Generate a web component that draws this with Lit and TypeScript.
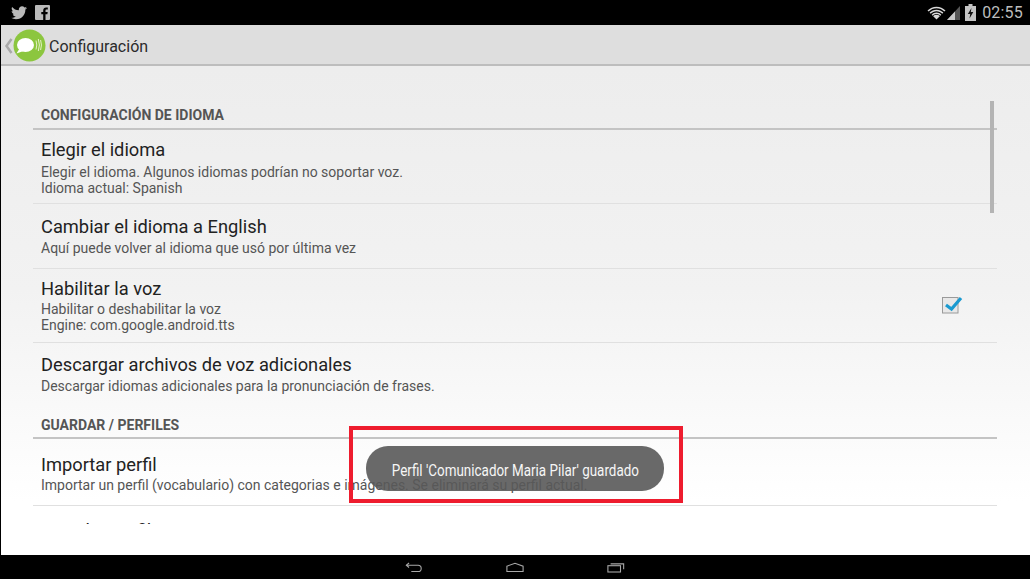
import { LitElement, html, css } from "lit";
import { customElement } from "lit/decorators.js";

interface Pref { title: string; lines: string[]; check?: boolean; cls: string }

const group1: Pref[] = [
  { title: "Elegir el idioma", lines: ["Elegir el idioma. Algunos idiomas podrían no soportar voz.", "Idioma actual: Spanish"], cls: "a" },
  { title: "Cambiar el idioma a English", lines: ["Aquí puede volver al idioma que usó por última vez"], cls: "b" },
  { title: "Habilitar la voz", lines: ["Habilitar o deshabilitar la voz", "Engine: com.google.android.tts"], check: true, cls: "c" },
  { title: "Descargar archivos de voz adicionales", lines: ["Descargar idiomas adicionales para la pronunciación de frases."], cls: "d last" },
];
const group2: Pref[] = [
  { title: "Importar perfil", lines: ["Importar un perfil (vocabulario) con categorias e imágenes. Se eliminará su perfil actual."], cls: "e" },
  { title: "Guardar perfil", lines: ["Guardar el perfil actual"], cls: "f last" },
];

@customElement("app-root")
export class AppRoot extends LitElement {
  static styles = css`
    :host { display: block; width: 1030px; height: 579px; position: relative; overflow: hidden; background: #000; font-family: Roboto, "Liberation Sans", sans-serif; }
    .status { height: 25px; display: flex; align-items: center; padding: 0 7px 0 11px; color: #b9b9b9; }
    .status svg { display: block; }
    .status .left { display: flex; gap: 8px; align-items: center; }
    .status .right { margin-left: auto; display: flex; align-items: center; }
    .time { font-size: 16px; margin-left: 6px; color: #bdbdbd; letter-spacing: .2px; }
    .main { margin-left: 1px; height: 530px; display: flex; flex-direction: column; background: linear-gradient(#ececec, #f2f2f2 50%, #fff 90%); position: relative; }
    .bar { height: 41px; flex: none; box-sizing: border-box; display: flex; align-items: center; padding: 2px 0 0 3px; background: #dedede; border-bottom: 2px solid #bdbdbd; color: #2b2b2b; font-size: 16px; }
    .bar .logo { margin-right: 3px; }
    .bar span { padding-top: 1px; }
    .list { margin: 35px 33px 0 32px; height: 423px; overflow: hidden; flex: none; }
    .head { height: 29px; box-sizing: border-box; padding: 7px 8px 0; font-size: 14px; font-weight: 700; color: #555; border-bottom: 2px solid #c4c4c4; line-height: 15px; }
    .head.second { height: 33px; padding-top: 12px; }
    .item { box-sizing: border-box; padding: 9px 8px 0; border-bottom: 1px solid #e0e0e0; position: relative; }
    .item.last { border-bottom: 0; }
    .t { font-size: 18.3px; line-height: 26px; color: #222; }
    .s { font-size: 14px; line-height: 16px; color: #555; }
    .a { height: 74px; padding-top: 6px; }
    .a .t { line-height: 28px; }
    .b { height: 65px; padding-top: 10px; }
    .c { height: 74px; padding-top: 8px; }
    .c .t { line-height: 24px; }
    .d { height: 63px; }
    .e { height: 67px; padding-top: 14px; }
    .e .t { line-height: 24px; }
    .f { height: 64px; padding-top: 12px; }
    .check { position: absolute; left: 908px; top: 26px; }
    .scroll { position: absolute; left: 989px; top: 76px; width: 4px; height: 112px; background: #b4b4b4; }
    .nav { height: 24px; display: flex; align-items: center; justify-content: center; gap: 83px; }
    .nav svg { display: block; }
    .toast { position: absolute; left: 366px; top: 446px; width: 298px; height: 45px; box-sizing: border-box; padding-top: 3px; border-radius: 22px; background: rgba(89,89,89,.9); color: #f6f6f6; display: flex; align-items: center; justify-content: center; font-size: 17px; }
    .toast span { display: inline-block; white-space: nowrap; transform: scaleX(.79); }
    .mark { position: absolute; left: 349px; top: 426px; width: 334px; height: 77px; box-sizing: border-box; border: 4px solid #ee1c2e; }
  `;

  private pref(p: Pref) {
    return html`<div class="item ${p.cls}">
      <div class="t">${p.title}</div>
      ${p.lines.map((l) => html`<div class="s">${l}</div>`)}
      ${p.check ? html`<svg class="check" width="22" height="20" viewBox="0 0 22 20">
        <rect x="1.5" y="2.500" width="15.500" height="15.500" fill="#e8e8e8" stroke="#9a9a9a"/>
        <path d="M5 10 L10.500 14 L20 3" fill="none" stroke="#1a9ad0" stroke-width="3.200"/>
      </svg>` : ""}
    </div>`;
  }

  render() {
    return html`
      <div class="status">
        <div class="left">
          <svg width="16" height="14" viewBox="0 0 24 20" fill="#b9b9b9"><path d="M24 2.4c-.9.4-1.8.7-2.8.8 1-.6 1.800-1.600 2.200-2.700-1 .6-2 1-3.100 1.200C19.300.7 18 0 16.600 0c-2.700 0-4.900 2.200-4.900 4.900 0 .4 0 .8.100 1.100C7.700 5.800 4.100 3.900 1.700.9c-.4.700-.7 1.600-.7 2.500 0 1.700.9 3.200 2.200 4.100-.8 0-1.600-.2-2.200-.6v.1c0 2.400 1.700 4.400 3.900 4.800-.4.100-.8.200-1.300.2-.3 0-.6 0-.9-.1.600 2 2.400 3.400 4.600 3.400-1.700 1.300-3.800 2.100-6.100 2.100-.4 0-.8 0-1.200-.1C2.200 18.700 4.800 19.500 7.500 19.500c9.100 0 14-7.500 14-14v-.6c1-.7 1.800-1.600 2.500-2.500z"/></svg>
          <svg width="15" height="15" viewBox="0 0 15 15"><rect width="15" height="15" rx="1" fill="#b9b9b9"/><path d="M10.500 15V9.300h1.900l.3-2.200h-2.200V5.700c0-.6.200-1.100 1.100-1.100h1.200V2.600c-.2 0-.9-.1-1.700-.1-1.700 0-2.900 1-2.900 3v1.600H6.300v2.200h1.900V15z" fill="#000"/></svg>
        </div>
        <div class="right">
          <svg width="19" height="14" viewBox="0 0 19 14"><path d="M9.500 13.500 6.200 10.200C7.100 9.300 8.300 8.800 9.500 8.800S11.900 9.300 12.800 10.200z" fill="#d8d8d8"/><path d="M4.700 8.700C6 7.400 7.700 6.600 9.500 6.600S13 7.400 14.300 8.700l-1 1C12.300 8.700 11 8.100 9.500 8.100S6.700 8.700 5.700 9.700z" fill="#d8d8d8"/><path d="M2.600 6.600C4.400 4.800 6.900 3.700 9.500 3.700S14.600 4.800 16.400 6.600l-1.100 1.100C13.800 6.200 11.700 5.200 9.500 5.200S5.200 6.200 3.700 7.700z" fill="#d8d8d8"/><path d="M.5 4.500C3 2 6 .7 9.500 .7S16 2 18.500 4.500l-1.100 1.100C15.200 3.400 12.500 2.200 9.500 2.200S3.800 3.400 1.600 5.600z" fill="#d8d8d8"/></svg>
          <svg width="13" height="15" viewBox="0 0 13 15" style="margin-left:1px"><path d="M0 15 13 1V15z" fill="#555"/><path d="M0 15 8 6.500V15z" fill="#c8c8c8"/></svg>
          <svg width="11" height="17" viewBox="0 0 11 17" style="margin-left:5px"><path d="M3.500 0h4v2H11v15H0V2h3.500z" fill="#c4c4c4"/><path d="M6.500 4 2.800 10h2.400L4.500 14.500 8.300 8H5.800z" fill="#111"/></svg>
          <span class="time">02:55</span>
        </div>
      </div>
      <div class="main">
        <div class="bar">
          <svg class="chev" width="9" height="16" viewBox="0 0 9 16"><path d="M7.500 1 2.500 8l5 7" fill="none" stroke="#a9a9a9" stroke-width="2.500"/></svg>
          <svg class="logo" width="33" height="33" viewBox="0 0 33 33">
            <circle cx="16.500" cy="16.500" r="16" fill="#8cc63f"/>
            <ellipse cx="12.500" cy="16" rx="8.500" ry="7" fill="#fff"/>
            <path d="M6.500 19.500 3.500 24.500 10.500 22z" fill="#fff"/>
            <path d="M23 11.500q1.600 4.500 0 9M25.300 10q2.200 6 0 12M27.600 11q1.700 5 0 10" fill="none" stroke="#e6f2c8" stroke-width="1"/>
          </svg>
          <span>Configuración</span>
        </div>
        <div class="list">
          <div class="head">CONFIGURACIÓN DE IDIOMA</div>
          ${group1.map((p) => this.pref(p))}
          <div class="head second">GUARDAR / PERFILES</div>
          ${group2.map((p) => this.pref(p))}
        </div>
        <div class="scroll"></div>
      </div>
      <div class="nav">
        <svg width="18" height="11" viewBox="0 0 20 11" fill="none" stroke="#a8a8a8" stroke-width="1.200"><path d="M1.500 3H14.500Q18 3 18 6.500T14.500 10H7"/><path d="M4.500 .5 1.500 3l3 2.500"/></svg>
        <svg width="18" height="11" viewBox="0 0 20 11" fill="none" stroke="#a8a8a8" stroke-width="1.200"><path d="M1 4 10 .8 19 4V10H1z"/></svg>
        <svg width="18" height="11" viewBox="0 0 20 11" fill="none" stroke="#a8a8a8" stroke-width="1.200"><rect x="1" y="3.500" width="14" height="7"/><path d="M4 1.500H18.500V7.500"/></svg>
      </div>
      <div class="toast"><span>Perfil 'Comunicador Maria Pilar' guardado</span></div>
      <div class="mark"></div>
    `;
  }
}
